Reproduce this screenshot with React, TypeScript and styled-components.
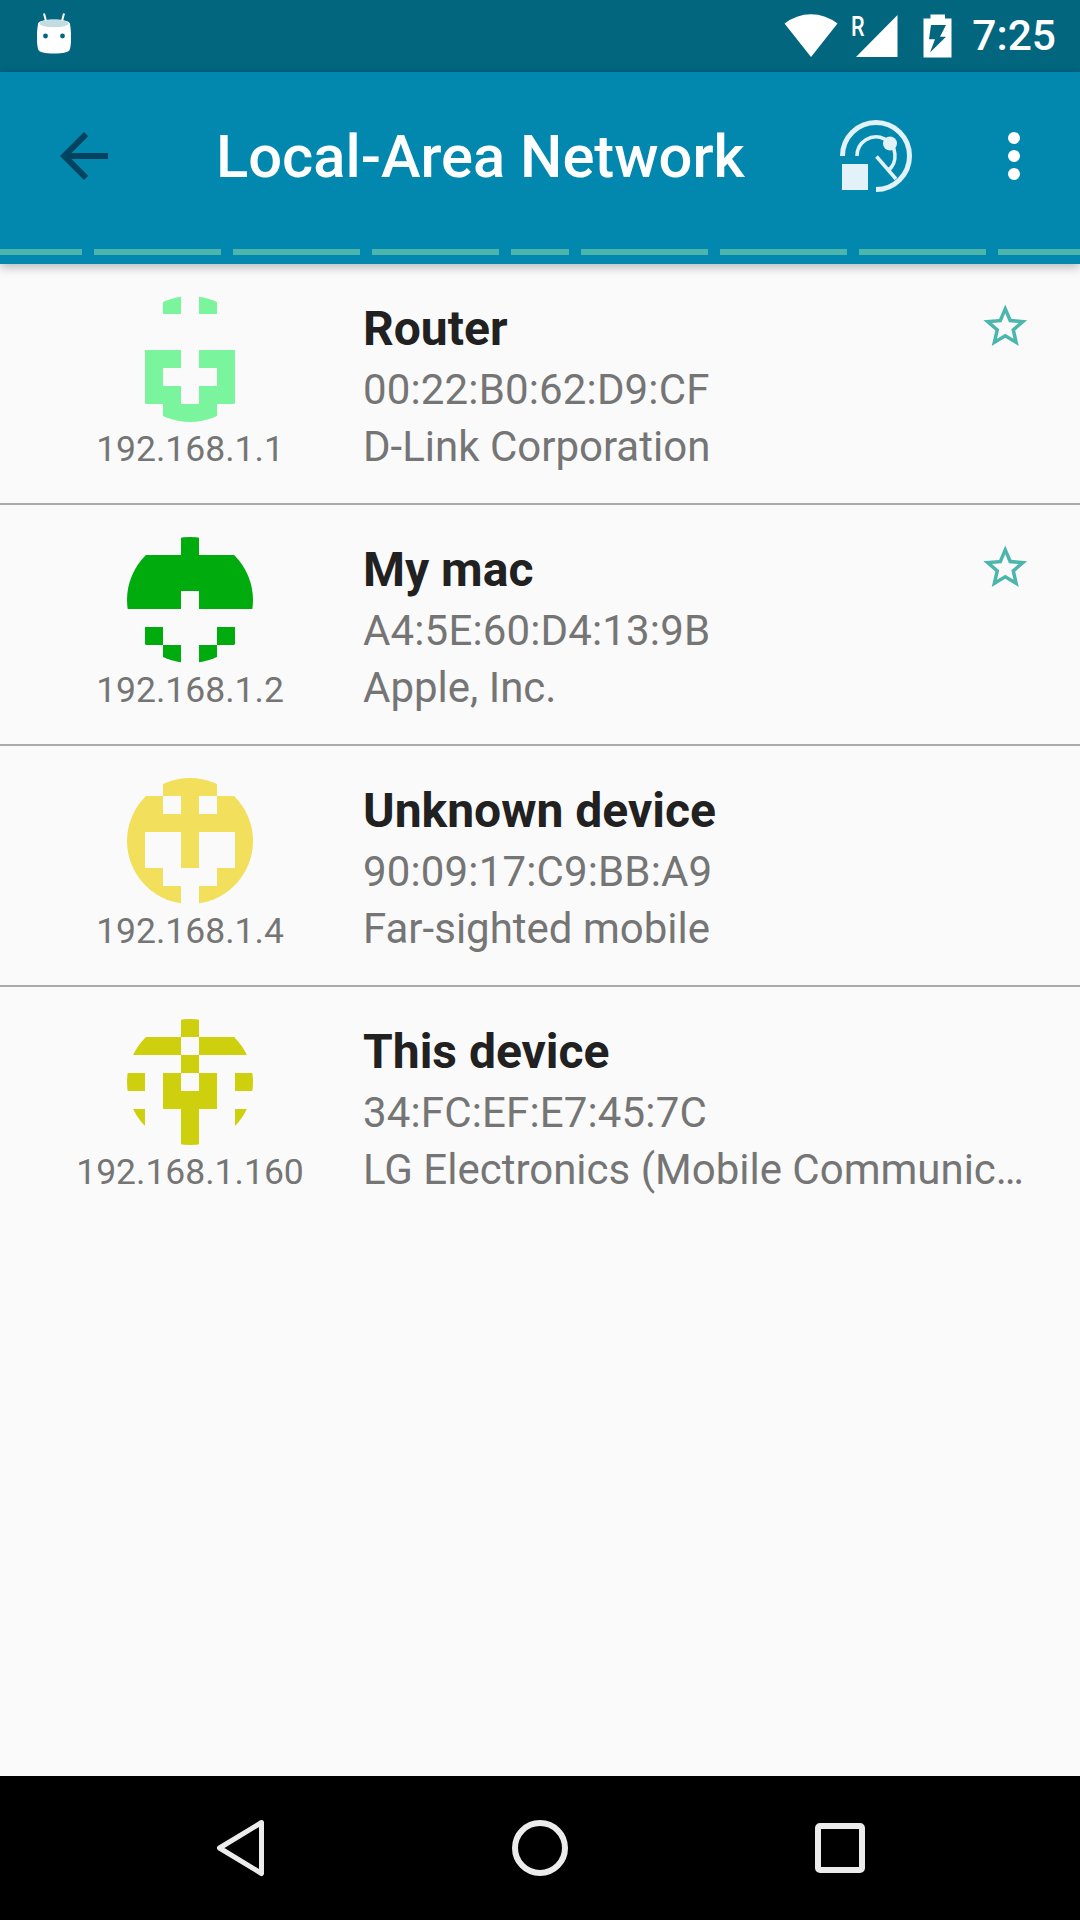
import styled, { createGlobalStyle } from 'styled-components';

const GlobalStyle = createGlobalStyle`
  html, body {
    margin: 0;
    padding: 0;
    font-family: Roboto, "Liberation Sans", sans-serif;
    background: #fafafa;
  }
`;

const Page = styled.div`
  display: flex;
  flex-direction: column;
  height: 1920px;
  width: 1080px;
  overflow: hidden;
`;

const StatusBar = styled.div`
  display: flex;
  align-items: center;
  height: 72px;
  padding: 0 24px 0 37px;
  background: #02667f;
  flex-shrink: 0;
  box-sizing: border-box;
`;

const Logo = styled.svg`
  display: block;
  width: 34px;
  height: 41px;
  margin-bottom: 6px;
`;

const StatusRight = styled.div`
  display: flex;
  align-items: center;
  margin-left: auto;
`;

const WifiIcon = styled.svg`
  width: 54px;
  height: 44px;
  margin-right: 13px;
`;

const SignalWrap = styled.div`
  position: relative;
  width: 47px;
  height: 44px;
  margin-right: 25px;
`;

const SignalIcon = styled.svg`
  display: block;
  width: 47px;
  height: 44px;
`;

const RoamingMark = styled.span`
  position: absolute;
  left: 0;
  top: -3px;
  font-size: 27px;
  line-height: 32px;
  font-weight: 500;
  color: #fff;
  transform: scaleX(0.8);
  transform-origin: left center;
`;

const BatteryIcon = styled.svg`
  width: 29px;
  height: 44px;
  margin-right: 20px;
`;

const Clock = styled.span`
  font-size: 42.5px;
  line-height: 72px;
  font-weight: 500;
  color: #fff;
`;

const AppBar = styled.header`
  position: relative;
  z-index: 1;
  flex-shrink: 0;
  height: 192px;
  background: #0288ae;
  box-shadow: 0 3px 10px rgba(0, 0, 0, 0.28);
`;

const Toolbar = styled.div`
  display: flex;
  align-items: center;
  height: 168px;
  padding: 0 30px 0 48px;
`;

const Title = styled.h1`
  flex: 1;
  margin: 2px 0 0 96px;
  font-size: 59.7px;
  line-height: 72px;
  font-weight: 500;
  color: #fff;
`;

const ToolIcon = styled.svg<{ $gap?: number }>`
  display: block;
  width: 72px;
  height: 72px;
  margin-left: ${(p) => p.$gap || 0}px;
`;

const TabStrip = styled.div`
  display: flex;
  gap: 12px;
  height: 6px;
  margin-top: 9px;
`;

const Dash = styled.div<{ $w: number }>`
  width: ${(p) => p.$w}px;
  height: 6px;
  background: #4db6ac;
`;

const List = styled.main`
  flex: 1;
  background: #fafafa;
`;

const Row = styled.div`
  position: relative;
  display: flex;
  height: 239px;
  border-bottom: 2px solid #aaaaaa;

  &:last-child {
    border-bottom: none;
  }
`;

const Avatar = styled.div`
  display: flex;
  flex-direction: column;
  align-items: center;
  flex-shrink: 0;
  box-sizing: border-box;
  width: 363px;
  padding: 32px 0 0 17px;
`;

const Ip = styled.div`
  margin-top: 7px;
  font-size: 35.5px;
  line-height: 40px;
  white-space: nowrap;
  color: #757575;
`;

const Info = styled.div`
  flex: 1;
  min-width: 0;
  padding: 34px 50px 0 0;
`;

const Name = styled.div`
  font-size: 48px;
  line-height: 62px;
  font-weight: 700;
  color: #212121;
`;

const Detail = styled.div`
  font-size: 42px;
  line-height: 58px;
  color: #757575;
  white-space: nowrap;
  overflow: hidden;
  text-overflow: ellipsis;
`;

const MacLine = styled(Detail)`
  position: relative;
  top: 1px;
  letter-spacing: 0.15px;
`;

const Star = styled.svg`
  position: absolute;
  top: 36px;
  right: 49px;
  width: 52.5px;
  height: 52.5px;
`;

const NavBar = styled.nav`
  display: grid;
  grid-template-columns: repeat(3, 300px);
  justify-content: center;
  align-items: center;
  flex-shrink: 0;
  height: 144px;
  background: #000;
`;

const NavIcon = styled.svg`
  display: block;
  justify-self: center;
  width: 60px;
  height: 60px;
  fill: none;
  stroke: #ececec;
  stroke-width: 6;
`;

// 7x7 identicon cut by a circle, '#' marks a filled cell
const Identicon = ({ cells, color }: { cells: string[]; color: string }) => {
  const d = cells
    .flatMap((row, y) =>
      row.split('').map((c, x) => (c === '#' ? `M${x} ${y}h1v1h-1z` : ''))
    )
    .join('');
  const id = `clip-${color.slice(1)}`;
  return (
    <svg width={126} height={126} viewBox="0 0 7 7" style={{ display: 'block' }}>
      <clipPath id={id}>
        <circle cx={3.5} cy={3.5} r={3.5} />
      </clipPath>
      <path d={d} fill={color} clipPath={`url(#${id})`} />
    </svg>
  );
};

const devices = [
  {
    name: 'Router',
    mac: '00:22:B0:62:D9:CF',
    vendor: 'D-Link Corporation',
    ip: '192.168.1.1',
    color: '#7af59d',
    star: true,
    cells: ['..#.#..', '.......', '.......', '.##.##.', '.#...#.', '.##.##.', '..###..'],
  },
  {
    name: 'My mac',
    mac: 'A4:5E:60:D4:13:9B',
    vendor: 'Apple, Inc.',
    ip: '192.168.1.2',
    color: '#00ab0e',
    star: true,
    cells: ['...#...', '#######', '#######', '###.###', '.......', '.#...#.', '..#.#..'],
  },
  {
    name: 'Unknown device',
    mac: '90:09:17:C9:BB:A9',
    vendor: 'Far-sighted mobile',
    ip: '192.168.1.4',
    color: '#f2df5b',
    star: false,
    cells: ['..###..', '##.#.##', '#######', '#..#..#', '#..#..#', '##...##', '###.###'],
  },
  {
    name: 'This device',
    mac: '34:FC:EF:E7:45:7C',
    vendor: 'LG Electronics (Mobile Communications)',
    ip: '192.168.1.160',
    color: '#ced00e',
    star: false,
    cells: ['...#...', '###.###', '...#...', '#.#.#.#', '..###..', '#..#..#', '...#...'],
  },
];

const dashes = [82, 127, 127, 127, 58, 127, 127, 127, 82];

const App = () => {
  return (
    <Page>
      <GlobalStyle />
      <StatusBar>
        <Logo viewBox="0 0 34 41">
          <path d="M7 0.500L9 8M27 0.500L25 8" stroke="#fff" strokeWidth={2} />
          <path
            d="M1 11C1 8 8 6.500 17 6.500S33 8 33 11C34.500 20 34.500 29 33 36C32 39.500 26 40.500 17 40.500S2 39.500 1 36C-0.500 29 -0.500 20 1 11Z"
            fill="#fff"
          />
          <ellipse cx={17} cy={10.500} rx={14.500} ry={3.800} fill="#c3dbe1" />
          <circle cx={8.500} cy={23} r={2.400} fill="#02667f" />
          <circle cx={25.500} cy={23} r={2.400} fill="#02667f" />
        </Logo>
        <StatusRight>
          <WifiIcon viewBox="0 0 54 44">
            <path d="M27 43L0.500 9.500A43 43 0 0 1 53.500 9.500Z" fill="#fff" />
          </WifiIcon>
          <SignalWrap>
            <SignalIcon viewBox="0 0 47 44">
              <path d="M5 43L46.500 1V43Z" fill="#fff" />
            </SignalIcon>
            <RoamingMark>R</RoamingMark>
          </SignalWrap>
          <BatteryIcon viewBox="0 0 29 44">
            <path
              fillRule="evenodd"
              d="M7.500 0.500H22V4.500H28.500V43.500H0.500V4.500H7.500ZM8 11H23L17 22.700H23L7 38.500L12 25.300H6Z"
              fill="#fff"
            />
          </BatteryIcon>
          <Clock>7:25</Clock>
        </StatusRight>
      </StatusBar>

      <AppBar>
        <Toolbar>
          <ToolIcon viewBox="0 0 24 24">
            <path
              d="M20 11H7.830l5.590-5.590L12 4l-8 8 8 8 1.410-1.410L7.830 13H20v-2z"
              fill="#02445f"
            />
          </ToolIcon>
          <Title>Local-Area Network</Title>
          <ToolIcon viewBox="0 0 72 72" fill="none" stroke="#e3f2f8">
            <path d="M2.500 36A33.500 33.500 0 1 1 36 69.500" strokeWidth={5} />
            <path d="M17 36A19 19 0 1 1 47.500 51" strokeWidth={3.500} />
            <path d="M36.500 36.500L56 59" strokeWidth={3.500} />
            <circle cx={50} cy={23.500} r={7} fill="#e3f2f8" stroke="none" />
            <rect x={2} y={44} width={26} height={26} fill="#e3f2f8" stroke="none" />
          </ToolIcon>
          <ToolIcon viewBox="0 0 24 24" $gap={66}>
            <circle cx={12} cy={6} r={2} fill="#fff" />
            <circle cx={12} cy={12} r={2} fill="#fff" />
            <circle cx={12} cy={18} r={2} fill="#fff" />
          </ToolIcon>
        </Toolbar>
        <TabStrip>
          {dashes.map((w, i) => (
            <Dash key={i} $w={w} />
          ))}
        </TabStrip>
      </AppBar>

      <List>
        {devices.map((d) => (
          <Row key={d.ip}>
            <Avatar>
              <Identicon cells={d.cells} color={d.color} />
              <Ip>{d.ip}</Ip>
            </Avatar>
            <Info>
              <Name>{d.name}</Name>
              <MacLine>{d.mac}</MacLine>
              <Detail>{d.vendor}</Detail>
            </Info>
            {d.star && (
              <Star viewBox="0 0 24 24">
                <path
                  d="M22 9.240l-7.190-.620L12 2 9.190 8.630 2 9.240l5.460 4.730L5.820 21 12 17.270 18.180 21l-1.630-7.030L22 9.240zM12 15.400l-3.760 2.270 1-4.280-3.320-2.880 4.380-.380L12 6.100l1.710 4.040 4.380.380-3.320 2.880 1 4.280L12 15.400z"
                  fill="#4db6ac"
                />
              </Star>
            )}
          </Row>
        ))}
      </List>

      <NavBar>
        <NavIcon viewBox="0 0 60 60">
          <path d="M51.500 4.500L9.500 30L51.500 55.500Z" strokeLinejoin="round" strokeWidth={5} />
        </NavIcon>
        <NavIcon viewBox="0 0 60 60">
          <circle cx={30} cy={30} r={25} />
        </NavIcon>
        <NavIcon viewBox="0 0 60 60">
          <rect x={8} y={8} width={44} height={44} rx={2} />
        </NavIcon>
      </NavBar>
    </Page>
  );
};

export default App;
